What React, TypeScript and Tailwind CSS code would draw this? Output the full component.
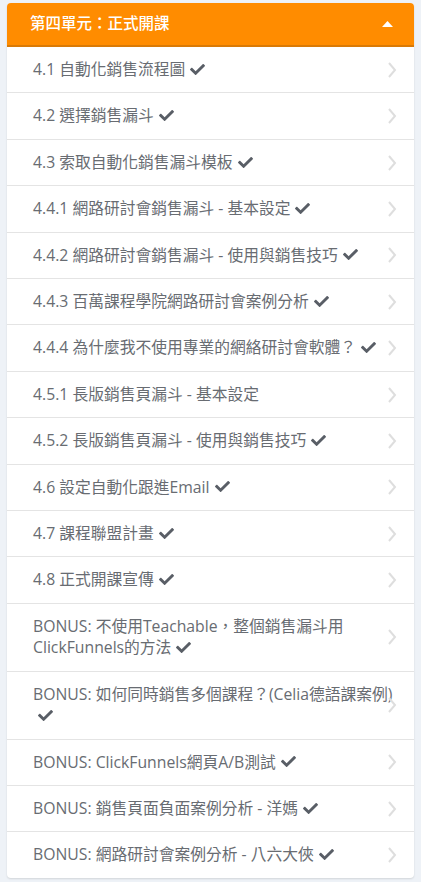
import { FaCheck } from "react-icons/fa";

type Lesson = { title: string; done: boolean };

const LESSONS: Lesson[] = [
  { title: "4.1 自動化銷售流程圖", done: true },
  { title: "4.2 選擇銷售漏斗", done: true },
  { title: "4.3 索取自動化銷售漏斗模板", done: true },
  { title: "4.4.1 網路研討會銷售漏斗 - 基本設定", done: true },
  { title: "4.4.2 網路研討會銷售漏斗 - 使用與銷售技巧", done: true },
  { title: "4.4.3 百萬課程學院網路研討會案例分析", done: true },
  { title: "4.4.4 為什麼我不使用專業的網絡研討會軟體？", done: true },
  { title: "4.5.1 長版銷售頁漏斗 - 基本設定", done: false },
  { title: "4.5.2 長版銷售頁漏斗 - 使用與銷售技巧", done: true },
  { title: "4.6 設定自動化跟進Email", done: true },
  { title: "4.7 課程聯盟計畫", done: true },
  { title: "4.8 正式開課宣傳", done: true },
  { title: "BONUS: 不使用Teachable，整個銷售漏斗用ClickFunnels的方法", done: true },
  { title: "BONUS: 如何同時銷售多個課程？(Celia德語課案例)", done: true },
  { title: "BONUS: ClickFunnels網頁A/B測試", done: true },
  { title: "BONUS: 銷售頁面負面案例分析 - 洋媽", done: true },
  { title: "BONUS: 網路研討會案例分析 - 八六大俠", done: true },
];

function Chevron() {
  return (
    <svg width="10" height="17" viewBox="0 0 10 17" className="absolute right-[17px] top-1/2 -translate-y-1/2">
      <polyline points="2,1.5 8,8.5 2,15.5" fill="none" stroke="#dedede" strokeWidth="2" />
    </svg>
  );
}

function LessonRow({ lesson }: { lesson: Lesson }) {
  return (
    <div className="relative border-b border-[#e4e4e4] last:border-b-0 py-3 pl-[26px] pr-[16px]">
      <p className="text-[15.75px] leading-[21.4px] text-[#686c72]">
        {lesson.title}
        {lesson.done && (
          <FaCheck className="inline-block ml-[5px] -mt-[3px] text-[#595e66]" size={15} />
        )}
      </p>
      <Chevron />
    </div>
  );
}

export default function App() {
  return (
    <div
      className="min-h-screen bg-[#eef2f7] px-[7px] pt-[3px] pb-[6px]"
      style={{ fontFamily: '"Open Sans", "Noto Sans CJK TC", sans-serif' }}
    >
      <div className="rounded-[4px] bg-white shadow-[0_1px_2px_rgba(0,0,0,0.12)] overflow-hidden">
        <div className="flex h-[44px] items-center justify-between border-b-2 border-[#d97a06] bg-[#ff8c00] pl-[23px] pr-[21px]">
          <span className="text-[15.5px] font-medium text-white">第四單元：正式開課</span>
          <svg width="11" height="6" viewBox="0 0 11 6">
            <polygon points="0,6 5.5,0 11,6" fill="#ffffff" />
          </svg>
        </div>
        {LESSONS.map((l) => (
          <LessonRow key={l.title} lesson={l} />
        ))}
      </div>
    </div>
  );
}
